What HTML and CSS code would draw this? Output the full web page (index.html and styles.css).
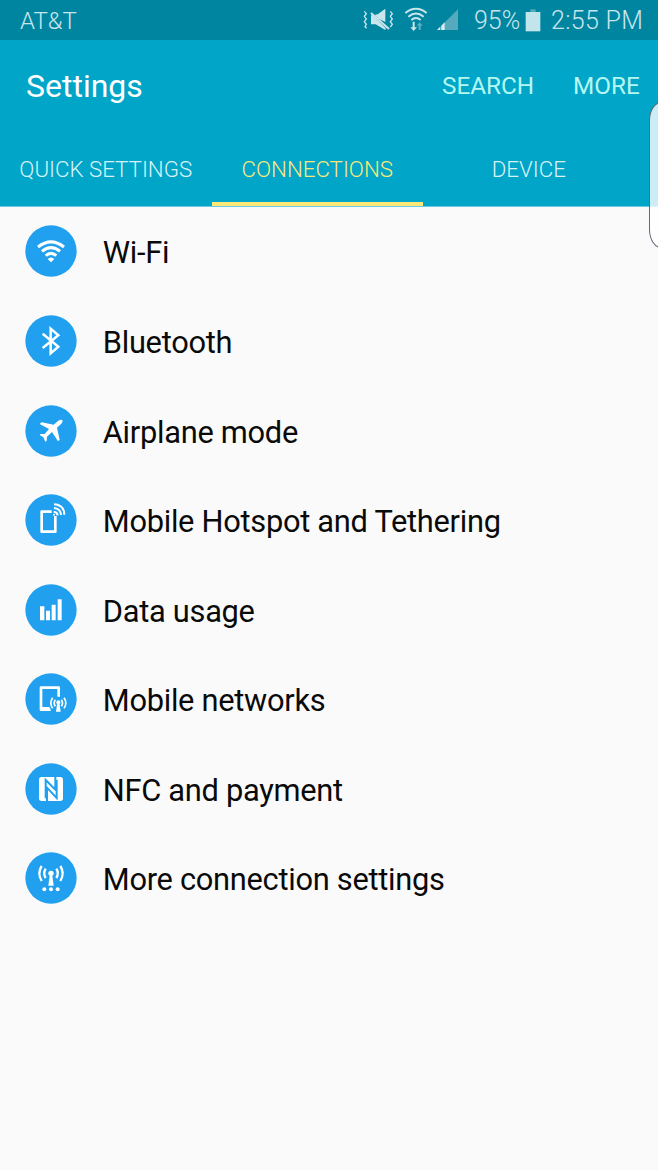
FILE: index.html
```html
<!DOCTYPE html>
<html lang="en">
<head>
<meta charset="utf-8">
<title>Settings</title>
<link rel="stylesheet" href="styles.css">
</head>
<body>
<header class="status">
  <span class="carrier">AT&amp;T</span>
  <svg class="indicators" width="100" height="40" viewBox="0 0 300 120">
    <g fill="#c9e6ed">
      <path d="M13 47h9l6-5 6 9-6 0zM12 46h16l27-20v40zM55 26v38L33 44z"/>
      <path d="M12 46l44 43v-8L21 46zM12 46v27h14l29 17v-5L14 46z"/>
    </g>
    <path d="M9 35L64 88" stroke="#0085a0" stroke-width="5"/>
    <path d="M12 39L66 87" stroke="#c9e6ed" stroke-width="6"/>
    <path d="M-8 34l6 7-6 8 6 8-6 8 6 8-4 7 5 5M70 34l6 7-6 8 6 8-6 8 6 8-6 8" fill="none" stroke="#c9e6ed" stroke-width="4"/>
    <g fill="none" stroke="#c9e6ed" stroke-width="6">
      <path d="M115 39Q147 14 179 39M124 50Q147 31 170 50M133 60Q147 48 161 60"/>
    </g>
    <path d="M137 65v17h-7l10 11 10-11h-7V65z" fill="#c9e6ed"/>
    <path d="M155 90V77h-6l9-10 9 10h-6v13z" fill="#5eafc0"/>
    <path d="M210 90L273 28V90z" fill="#55aabd"/>
    <path d="M210 90l9-9v9zM223 90V77l10-10v23z" fill="#d6edf2"/>
  </svg>
  <span class="percent">95%</span>
  <svg class="battery" width="16" height="24" viewBox="0 0 48 72"><path d="M16 1h16v8H16z" fill="#55aabd"/><path d="M2 9h44v58H2z" fill="#c2e5eb"/></svg>
  <span class="clock">2:55 PM</span>
</header>
<section class="appbar">
  <div class="titlebar">
    <h1>Settings</h1>
    <span class="search">SEARCH</span>
    <span class="more">MORE</span>
  </div>
  <nav class="tabs">
    <span class="tab quick">QUICK SETTINGS</span>
    <span class="tab active">CONNECTIONS</span>
    <span class="tab device">DEVICE</span>
  </nav>
</section>
<div class="edge"></div>
<main class="list">
  <div class="row"><svg class="icon" viewBox="16 16 156 156"><circle cx="94" cy="94" r="77"/>
    <g class="line" stroke-width="9"><path d="M55 82Q94 51 133 82M67 95Q94 73 121 95M78 108Q94 94 110 108"/></g><path class="solid" d="M84 118Q94 109 104 118L94 128z"/></svg><span>Wi-Fi</span></div>
  <div class="row"><svg class="icon" viewBox="16 15 156 156"><circle cx="94" cy="93" r="77"/>
    <path class="line" stroke-width="7.5" d="M69 71L116 110L93 130V56L116 76L69 114"/></svg><span>Bluetooth</span></div>
  <div class="row"><svg class="icon" viewBox="16 14 156 156"><circle cx="94" cy="92" r="77"/>
    <path class="solid" d="M128 59Q122 56 115 62L102 73L66 66L60 71L88 86L75 101L62 101L60 104L71 111L77 124L81 122L82 109L97 95L115 123L120 118L112 82L125 70Q131 63 128 59z"/></svg><span>Airplane mode</span></div>
  <div class="row"><svg class="icon" viewBox="16 13 156 156"><circle cx="94" cy="91" r="77"/>
    <path class="line" stroke-width="8" stroke-linejoin="round" d="M96 66H66V126H107V79"/><g class="line" stroke-width="6"><path d="M102 66Q113 67 114 77M103 55Q123 57 124 76M103 44Q134 46 134 75"/></g><circle class="solid" cx="103" cy="75" r="3"/></svg><span>Mobile Hotspot and Tethering</span></div>
  <div class="row"><svg class="icon" viewBox="16 14 156 156"><circle cx="94" cy="92" r="77"/>
    <path class="solid" d="M61 81h13v42H61zM79 94h12v29H79zM96 76h12v47H96zM114 60h12v63h-12z"/></svg><span>Data usage</span></div>
  <div class="row"><svg class="icon" viewBox="16 13 156 156"><circle cx="94" cy="91" r="77"/>
    <path class="line" stroke-width="8" stroke-linejoin="round" d="M92 123H64V57H117V84"/><path class="solid" d="M64 115h25l4 12H64z"/><g class="line" stroke-width="5"><path d="M107 93Q100 103 107 113M99 87Q88 103 99 119M125 93Q132 103 125 113M133 87Q144 103 133 119"/></g><circle class="solid" cx="116" cy="101" r="6"/><path class="solid" d="M113 101h6l4 28h-14z"/></svg><span>Mobile networks</span></div>
  <div class="row"><svg class="icon" viewBox="16 15 156 156"><circle cx="94" cy="93" r="77"/>
    <rect class="solid" x="58" y="57" width="72" height="72" rx="8"/><path d="M78 121V66L107 95V55M82 131V89L111 120V65" fill="none" stroke="#20a0ef" stroke-width="6"/></svg><span>NFC and payment</span></div>
  <div class="row"><svg class="icon" viewBox="16 16 156 156"><circle cx="94" cy="94" r="77"/>
    <g class="line" stroke-width="7"><path d="M78 66Q69 80 78 94M66 58Q52 80 66 103M110 66Q119 80 110 94M122 58Q136 80 122 103"/></g><circle class="solid" cx="94" cy="80" r="8"/><path class="solid" d="M91 80h6l5 37H86z"/><circle class="solid" cx="74" cy="128" r="6"/><circle class="solid" cx="94" cy="128" r="6"/><circle class="solid" cx="114" cy="128" r="6"/></svg><span>More connection settings</span></div>
</main>
</body>
</html>
```
FILE: styles.css
```css
* { box-sizing: border-box; }
body { margin: 0; width: 658px; height: 1170px; background: #fafafa; font-family: Roboto, "Liberation Sans", sans-serif; position: relative; overflow: hidden; white-space: nowrap; }
.status { height: 40px; padding-top: 2px; background: #0085a0; display: flex; align-items: center; color: #c9e6ed; font-size: 25px; font-weight: 300; line-height: 38px; }
.carrier { margin-left: 20px; width: 347px; font-size: 24px; }
.indicators { overflow: visible; flex: none; margin-top: -2px; }
.percent { width: 51px; margin-left: 7px; }
.battery { flex: none; margin-left: 0; }
.clock { margin-left: 10px; letter-spacing: .3px; }
.appbar { height: 167px; background: #00a5c8; border-bottom: 1px solid #66cbe0; }
.titlebar { height: 92px; display: flex; align-items: center; color: #b5f7f2; font-size: 24.3px; }
h1 { margin: 0 0 0 26px; width: 416px; color: #fff; font-size: 32px; font-weight: 400; }
.search { width: 131px; }
.search, .more { padding-bottom: 2px; }
.tabs { height: 74px; display: flex; font-size: 22.3px; font-weight: 300; color: #d8f3f8; }
.tab { width: 211.5px; line-height: 74px; height: 74px; text-align: center; border-bottom: 4px solid transparent; }
.active { color: #fce978; border-bottom-color: #fce978; }
.edge { position: absolute; left: 649px; top: 102px; width: 24px; height: 146px; border: 1px solid #667; border-radius: 14px / 22px; background: rgba(255,255,255,.8); }
.list { margin-top: -.3px; display: flex; flex-direction: column; color: #0a0a0a; font-size: 30.8px; letter-spacing: -.28px; }
.row { height: 89.57px; padding-left: 25.3px; display: flex; align-items: center; gap: 25.5px; }
.row span { padding-top: 3px; }
.icon { width: 52px; height: 52px; flex: none; fill: #20a0ef; }
.line { fill: none; stroke: #fff; }
.solid { fill: #fff; }
```
